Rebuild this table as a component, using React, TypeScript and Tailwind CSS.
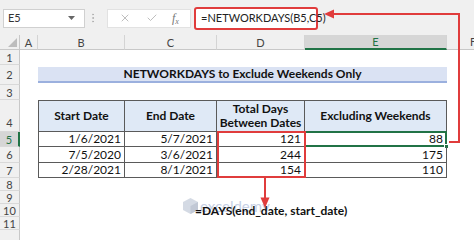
import { Check, X, EllipsisVertical } from 'lucide-react';

const sheetFont = { fontFamily: 'Lato, "Liberation Sans", sans-serif' };

const rows = [
  { n: 5, start: '1/6/2021', end: '5/7/2021', total: 121, excl: 88 },
  { n: 6, start: '7/5/2020', end: '3/6/2021', total: 244, excl: 175 },
  { n: 7, start: '2/28/2021', end: '8/1/2021', total: 154, excl: 110 },
];

function RowHead({ n, active, bottom }: { n?: number; active?: boolean; bottom?: boolean }) {
  return (
    <div
      className={`flex justify-center text-[11px] leading-none border-b border-[#d9d9d9] ${
        bottom ? 'items-end pb-[3px]' : 'items-center'
      } ${active ? 'bg-[#d6d6d6] text-[#217346] border-r-2 border-r-[#217346]' : 'bg-[#f0f0f0] text-[#444] border-r border-r-[#c8c8c8]'}`}
    >
      {n}
    </div>
  );
}

function ColHead({ label, active }: { label: string; active?: boolean }) {
  return (
    <div
      className={`flex items-center justify-center text-[11px] leading-none border-r border-[#d4d4d4] ${
        active ? 'bg-[#d6d6d6] text-[#217346] border-b-2 border-b-[#217346]' : 'bg-[#f0f0f0] text-[#444] border-b border-b-[#c8c8c8]'
      }`}
    >
      {label}
    </div>
  );
}

function Empty({ span }: { span?: string }) {
  return <div className={span ?? ''} />;
}

function FormulaBar() {
  return (
    <div className="h-[35px] bg-[#f0f0f0] flex items-center pl-[3px] pt-[1px]" style={sheetFont}>
      <div className="w-[82px] h-[19px] bg-white border border-[#d0d0d0] flex items-center justify-between px-1 text-[11px] text-[#333]">
        <span>E5</span>
        <svg width="7" height="4" viewBox="0 0 7 4" className="mr-[5px]">
          <path d="M0 0h7L3.5 4z" fill="#666" />
        </svg>
      </div>
      <EllipsisVertical className="ml-[2px] w-[12px] h-[12px] text-[#b0b0b0]" strokeWidth={2} />
      <div className="ml-[8px] w-[84px] h-[19px] bg-white border border-[#e2e2e2] flex items-center justify-around px-1 text-[#a8a8a8]">
        <X className="w-[12px] h-[12px]" strokeWidth={1.5} />
        <Check className="w-[12px] h-[12px]" strokeWidth={1.5} />
        <span className="text-[12px] italic text-[#777]" style={{ fontFamily: '"Liberation Serif", serif' }}>
          f<sub className="text-[8px]">x</sub>
        </span>
      </div>
      <div className="ml-[3px] w-[124px] h-[23px] bg-white border-2 border-[#e03c3c] rounded-[3px] flex items-center pl-[5px] text-[11px] text-[#222] whitespace-nowrap">
        =NETWORKDAYS(B5,C5)
      </div>
    </div>
  );
}

export default function App() {
  const cell = 'border-r border-b border-[#5a5a5a]';
  const headCell = `${cell} border-t bg-[#dfe9f6] flex items-center justify-center text-center font-bold text-[12px] leading-[14px] text-[#111]`;
  const numCell = `${cell} flex items-center justify-end pr-[3px] text-[12px] text-[#111]`;

  return (
    <div className="w-[474px] h-[240px] overflow-hidden bg-white relative select-none">
      <FormulaBar />

      <div
        className="grid grid-cols-[20px_18px_87px_92px_88px_142px_1fr] grid-rows-[15px_15px_20px_15px_32px_15px_16px_15px_13px_13px_13px_13px_13px]"
        style={sheetFont}
      >
        {/* column headers */}
        <div className="bg-[#f0f0f0] border-r border-b border-[#c8c8c8] flex items-end justify-end p-[2px]">
          <svg width="9" height="9" viewBox="0 0 9 9">
            <path d="M9 0V9H0z" fill="#bdbdbd" />
          </svg>
        </div>
        <ColHead label="A" />
        <ColHead label="B" />
        <ColHead label="C" />
        <ColHead label="D" />
        <ColHead label="E" active />
        <div className="bg-[#f0f0f0] border-b border-[#c8c8c8] flex items-center pl-[23px] text-[11px] text-[#444]">F</div>

        {/* row 1 */}
        <RowHead n={1} />
        <Empty span="col-span-6" />

        {/* row 2: title */}
        <RowHead n={2} />
        <Empty />
        <div className="col-span-4 my-[2px] bg-[#dae2f3] border-b-2 border-[#9bb0de] flex items-center justify-center font-bold text-[12px] text-[#111]">
          NETWORKDAYS to Exclude Weekends Only
        </div>
        <Empty />

        {/* row 3 */}
        <RowHead n={3} />
        <Empty span="col-span-6" />

        {/* row 4: table header */}
        <RowHead n={4} bottom />
        <Empty />
        <div className={`${headCell} border-l`}>Start Date</div>
        <div className={headCell}>End Date</div>
        <div className={headCell}>
          Total Days
          <br />
          Between Dates
        </div>
        <div className={headCell}>Excluding Weekends</div>
        <Empty />

        {rows.map((r) => (
          <div key={r.n} className="contents">
            <RowHead n={r.n} active={r.n === 5} />
            <Empty />
            <div className={`${numCell} border-l`}>{r.start}</div>
            <div className={numCell}>{r.end}</div>
            <div className={numCell}>{r.total}</div>
            <div className={`${numCell} relative`}>
              {r.excl}
              {r.n === 5 && (
                <>
                  <div className="absolute -inset-[1px] border-2 border-[#217346]" />
                  <div className="absolute -right-[3px] -bottom-[3px] w-[5px] h-[5px] bg-[#217346] border border-white" />
                </>
              )}
            </div>
            <Empty />
          </div>
        ))}

        {/* rows 8 - 12 */}
        <RowHead n={8} />
        <Empty span="col-span-6" />
        <RowHead n={9} />
        <Empty span="col-span-6" />
        <RowHead n={10} />
        <Empty />
        <Empty />
        <div className="col-span-3 relative flex items-center pl-[70px] font-bold text-[12px] text-[#111] whitespace-nowrap">
          {/* faint site watermark behind the formula note */}
          <div className="absolute left-[58px] -top-[6px] flex items-center gap-[2px] opacity-60 pointer-events-none">
            <svg width="15" height="16" viewBox="0 0 15 16">
              <path d="M7.5 0L15 4v8l-7.5 4L0 12V4z" fill="#b9c3d3" />
              <path d="M7.5 8L15 4v8l-7.5 4z" fill="#98a5ba" />
            </svg>
            <span className="text-[15px] leading-none font-normal text-[#9fb2d4]">exceldemy</span>
          </div>
          <span className="relative">=DAYS(end_date, start_date)</span>
        </div>
        <Empty />
        <RowHead n={11} />
        <Empty span="col-span-6" />
        <RowHead />
        <Empty span="col-span-6" />
      </div>

      {/* red callouts */}
      <svg className="absolute inset-0 pointer-events-none" width="474" height="240" viewBox="0 0 474 240">
        <rect x="218" y="132" width="87" height="45" fill="none" stroke="#e03c3c" strokeWidth="2" />
        <path d="M265 178V199" stroke="#e03c3c" strokeWidth="2" fill="none" />
        <path d="M260.5 197.5L265 208l4.5-10.5z" fill="#e03c3c" />
        <path d="M449 142H459V14H332" stroke="#e03c3c" strokeWidth="2" fill="none" />
        <path d="M334 9.5L324 14l10 4.5z" fill="#e03c3c" />
      </svg>
    </div>
  );
}
